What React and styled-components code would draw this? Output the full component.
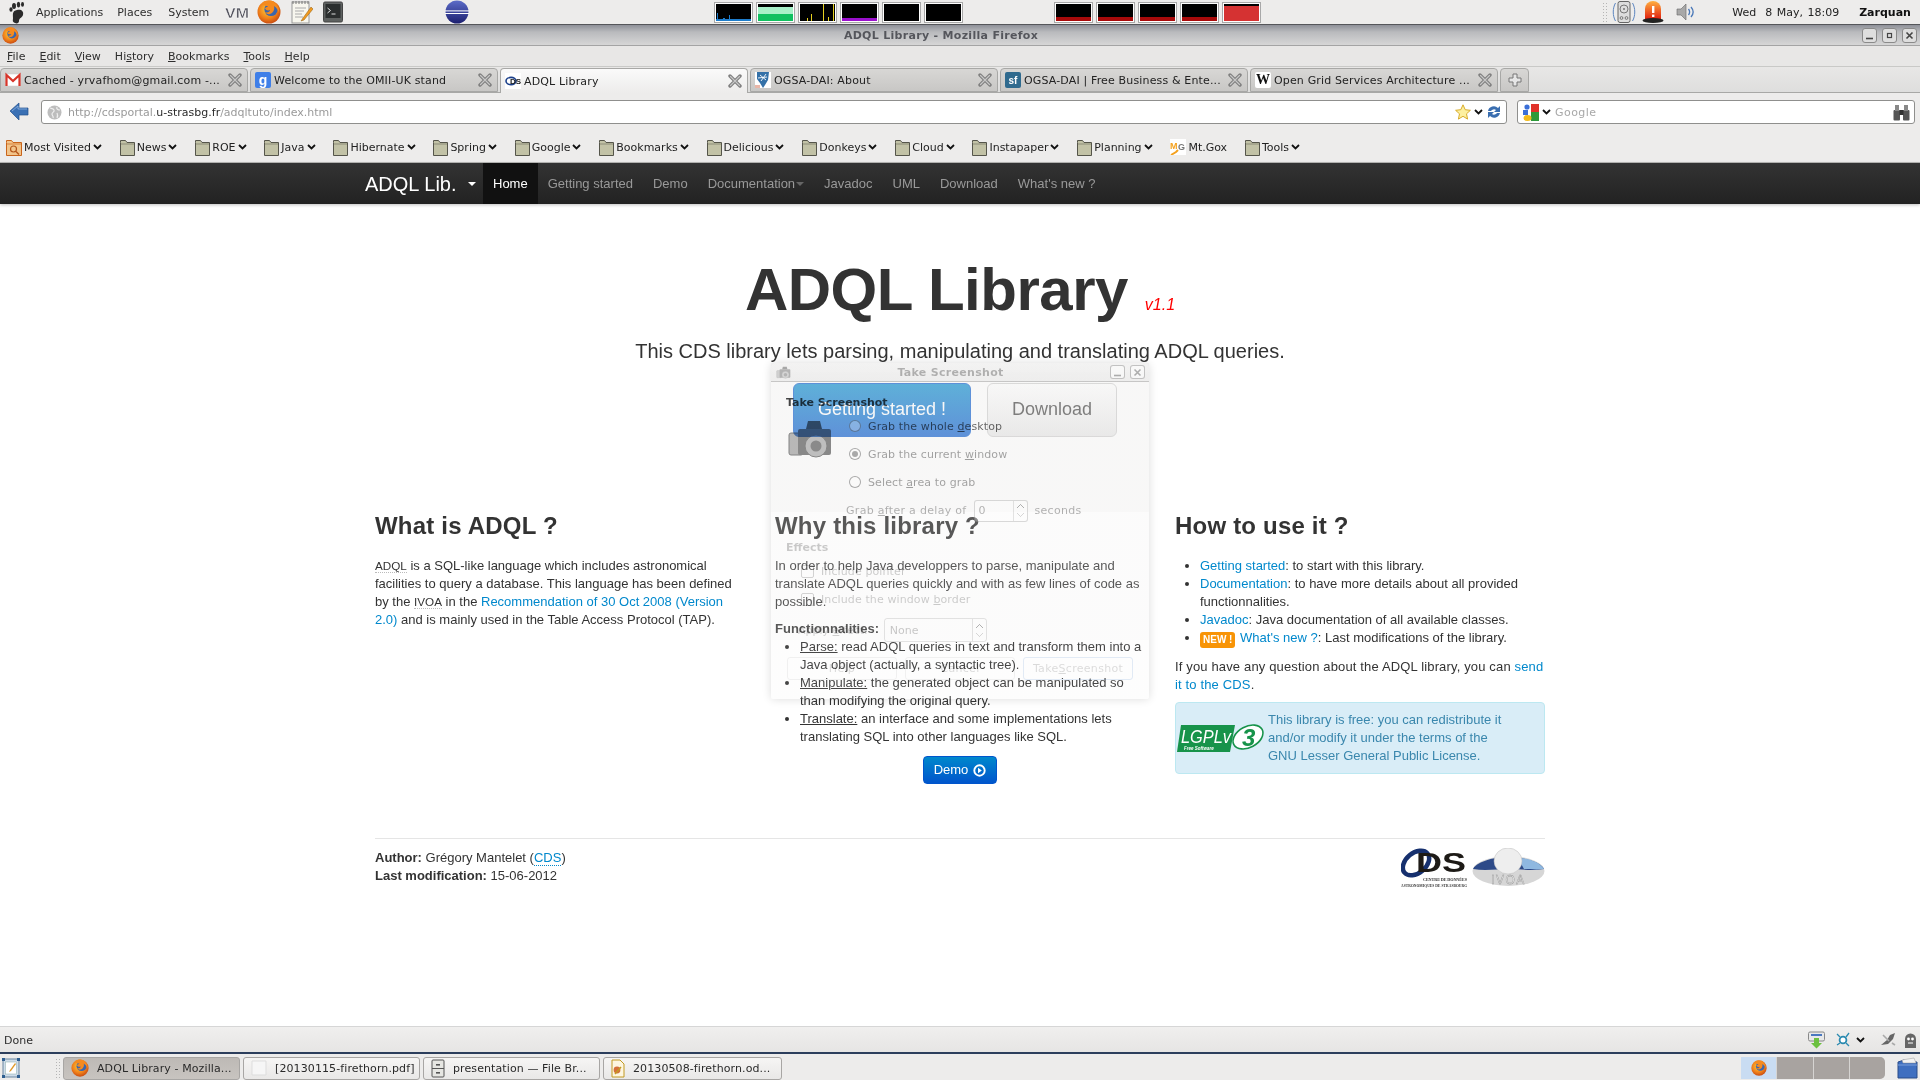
import styled, { createGlobalStyle } from 'styled-components'

const GlobalStyle = createGlobalStyle`
    html, body { margin: 0; padding: 0; background: #fff; }
    * { box-sizing: border-box; }
`

const Screen = styled.div`
    position: relative;
    width: 1920px;
    height: 1080px;
    overflow: hidden;
    display: flex;
    flex-direction: column;
    font-family: "DejaVu Sans", sans-serif;
    font-size: 11px;
    color: #222;
    background: #edeceb;
`

/* ---------- gnome top panel ---------- */
const TopPanel = styled.div`
    height: 25px;
    flex: none;
    display: flex;
    align-items: center;
    background: #edeceb;
    padding-left: 8px;
    border-bottom: 1px solid #55565a;
`
const PanelMenu = styled.span`
    margin-left: ${p => p.$gap}px;
    color: #2e2e2e;
`
const PanelIcon = styled.span`
    display: flex;
    margin-left: ${p => p.$gap}px;
`
const MonitorGroup = styled.div`
    display: flex;
    gap: 3px;
    margin-left: ${p => p.$gap}px;
`
const MonitorCell = styled.div`
    width: 39px;
    height: 21px;
    border: 1px solid #a8a8a8;
    padding: 1px;
    background: #fff;
    display: flex;
`
const PanelClock = styled.span`
    margin-left: 36px;
    color: #222;
    word-spacing: 1px;
    white-space: pre;
`
const PanelUser = styled.span`
    margin-left: 20px;
    font-weight: bold;
    color: #111;
`
const Dots = styled.span`
    width: 5px;
    height: 20px;
    margin-left: ${p => p.$gap}px;
    background-image: radial-gradient(#b5b5b5 0.8px, transparent 1px);
    background-size: 3px 3px;
`

/* ---------- firefox chrome ---------- */
const TitleBar = styled.div`
    height: 21px;
    flex: none;
    position: relative;
    display: flex;
    align-items: center;
    justify-content: space-between;
    padding: 1px 3px 0 2px;
    background: linear-gradient(#8e9098 0, #b9babd 35%, #d6d6d6 100%);
    border-bottom: 1px solid #a4a4a4;
`
const WindowTitle = styled.span`
    position: absolute;
    left: 0;
    right: 38px;
    top: 4px;
    text-align: center;
    font-weight: bold;
    letter-spacing: 0.3px;
    color: #55565c;
`
const WinButtons = styled.div`
    display: flex;
    gap: 5px;
`
const WinButton = styled.span`
    width: 15px;
    height: 15px;
    border: 1px solid #8a8a8a;
    border-radius: 3px;
    display: flex;
    align-items: center;
    justify-content: center;
    background: #dedede;
`
const MenuBar = styled.div`
    height: 21px;
    flex: none;
    display: flex;
    align-items: center;
    gap: 14px;
    padding: 1px 0 0 7px;
    background: #e8e7e6;
    border-bottom: 1px solid #c9c9c7;
    color: #2e2e2e;
`
const Mn = styled.span`
    text-decoration: underline;
`
const TabStrip = styled.div`
    height: 26px;
    flex: none;
    display: flex;
    align-items: flex-end;
    gap: 2px;
    background: linear-gradient(#e8e7e6, #dededd);
    border-bottom: 1px solid #a8a8a6;
`
const Tab = styled.div`
    width: 248px;
    margin-bottom: ${p => (p.$active ? '-1px' : '0')};
    height: ${p => (p.$active ? '25px' : '24px')};
    display: flex;
    align-items: center;
    padding: 0 5px 0 4px;
    gap: 3px;
    border: 1px solid #a8a8a6;
    border-bottom: ${p => (p.$active ? 'none' : '1px solid #a8a8a6')};
    border-radius: 4px 4px 0 0;
    background: ${p => (p.$active ? 'linear-gradient(#fafafa, #edeceb)' : 'linear-gradient(#d8d7d5, #c8c7c5)')};
    color: #222;
`
const TabTitle = styled.span`
    flex: 1;
    white-space: nowrap;
    overflow: hidden;
    letter-spacing: 0.15px;
    padding-top: 1px;
`
const NewTab = styled.div`
    width: 29px;
    height: 24px;
    display: flex;
    align-items: center;
    justify-content: center;
    border: 1px solid #a8a8a6;
    border-radius: 4px 4px 0 0;
    background: linear-gradient(#d8d7d5, #c8c7c5);
`
const FavText = styled.span`
    width: 16px;
    height: 16px;
    flex: none;
    display: flex;
    align-items: center;
    justify-content: center;
    border-radius: 2px;
    background: ${p => p.$bg};
    color: ${p => p.$color};
    font-family: ${p => p.$serif ? '"Liberation Serif", serif' : '"Liberation Sans", sans-serif'};
    font-size: ${p => p.$size || 11}px;
    font-weight: bold;
`
const UrlRow = styled.div`
    height: 32px;
    flex: none;
    display: flex;
    align-items: flex-start;
    padding: 7px 5px 0 9px;
    background: #edeceb;
`
const BackWrap = styled.span`
    display: flex;
    width: 32px;
    flex: none;
    padding-top: 2px;
`
const InputBox = styled.div`
    height: 24px;
    width: ${p => p.$width}px;
    margin-left: ${p => p.$gap || 0}px;
    flex: none;
    display: flex;
    align-items: center;
    padding: 0 4px 0 5px;
    gap: ${p => p.$inner || 3}px;
    background: #fff;
    border: 1px solid #8f8f8d;
    border-radius: 3px;
`
const UrlText = styled.span`
    flex: 1;
    margin-left: 3px;
    color: #9a9a9a;
`
const UrlHost = styled.span`
    color: #2a2a2a;
`
const SearchHint = styled.span`
    flex: 1;
    color: #a8a8a8;
    letter-spacing: 0.04em;
    margin-left: 2px;
`
const BookmarkBar = styled.div`
    height: 38px;
    flex: none;
    display: flex;
    align-items: center;
    padding: 7px 0 0 6px;
    background: #edeceb;
    border-bottom: 1px solid #b9b9b7;
    gap: 17.8px;
`
const Bookmark = styled.span`
    display: flex;
    align-items: center;
    gap: 2px;
    color: #222;
`

/* ---------- web page ---------- */
const Page = styled.div`
    flex: 1;
    min-height: 0;
    background: #fff;
    font-family: "Liberation Sans", Arial, sans-serif;
    font-size: 13px;
    line-height: 18px;
    color: #333;
`
const NavBar = styled.div`
    height: 41px;
    background: linear-gradient(#333, #222);
    box-shadow: 0 1px 3px rgba(0, 0, 0, 0.25);
    display: flex;
    padding-left: 365px;
`
const Brand = styled.div`
    width: 118px;
    display: flex;
    align-items: center;
    gap: 11px;
    font-size: 20px;
    color: #fff;
`
const Caret = styled.span`
    width: 0;
    height: 0;
    margin-left: ${p => p.$gap || 0}px;
    border-left: 4px solid transparent;
    border-right: 4px solid transparent;
    border-top: 4px solid ${p => p.$color};
`
const NavItem = styled.div`
    display: flex;
    align-items: center;
    padding: 0 10px;
    color: ${p => (p.$active ? '#fff' : '#999')};
    background: ${p => (p.$active ? '#111' : 'transparent')};
`
const Container = styled.div`
    width: 1170px;
    margin: 0 auto;
`
const Hero = styled.div`
    padding-top: 56px;
    text-align: center;
`
const HeroTitle = styled.h1`
    margin: 0;
    font-size: 60px;
    line-height: 60px;
    font-weight: bold;
    letter-spacing: -0.5px;
    color: #333;
`
const Version = styled.small`
    font-size: 16px;
    font-weight: normal;
    font-style: italic;
    letter-spacing: 0;
    color: #f00;
    margin-left: 17px;
`
const HeroLead = styled.p`
    margin: 3px 0 0;
    font-size: 20px;
    line-height: 27px;
    color: #333;
`
const HeroButtons = styled.div`
    display: flex;
    justify-content: center;
    gap: 16px;
    margin-top: 18px;
    padding-right: 10px;
`
const BigButton = styled.div`
    width: ${p => p.$width}px;
    height: 54px;
    display: flex;
    align-items: center;
    justify-content: center;
    padding-bottom: 3px;
    border-radius: 6px;
    font-size: 18px;
    border: 1px solid ${p => (p.$primary ? '#0055cc' : '#ccc')};
    background: ${p => (p.$primary ? 'linear-gradient(#0088cc, #0055cc)' : 'linear-gradient(#fff, #e6e6e6)')};
    color: ${p => (p.$primary ? '#fff' : '#333')};
`
const Columns = styled.div`
    display: grid;
    grid-template-columns: repeat(3, 370px);
    column-gap: 30px;
    margin-top: 71px;
`
const Column = styled.div``
const Heading = styled.h2`
    margin: 0 0 13px;
    font-size: 24px;
    line-height: 36px;
    font-weight: bold;
    letter-spacing: 0.2px;
    color: #333;
`
const Para = styled.p`
    margin: 0 0 ${p => p.$after ?? 10}px;
    letter-spacing: ${p => p.$track || 0}px;
`
const Abbr = styled.span`
    font-size: 11.7px;
    border-bottom: 1px dotted #bbb;
`
const Link = styled.span`
    color: #0088cc;
`
const UnderLine = styled.span`
    text-decoration: underline;
`
const List = styled.ul`
    margin: 0 0 10px;
    padding: 0 0 0 25px;
`
const NewLabel = styled.span`
    display: inline-block;
    padding: 0 3px;
    height: 16px;
    line-height: 16px;
    border-radius: 3px;
    background: #f89406;
    color: #fff;
    font-size: 10px;
    font-weight: bold;
    vertical-align: -1px;
    margin-right: 1px;
`
const DemoRow = styled.div`
    display: flex;
    justify-content: center;
    margin-top: 0;
`
const DemoButton = styled.div`
    width: 74px;
    height: 28px;
    display: flex;
    align-items: center;
    justify-content: center;
    gap: 5px;
    border: 1px solid #0055cc;
    border-radius: 4px;
    color: #fff;
    background: linear-gradient(#0088cc, #0055cc);
`
const Notice = styled.div`
    height: 72px;
    margin-top: 8px;
    display: flex;
    align-items: center;
    padding-left: 1px;
    gap: 2px;
    background: #d9edf7;
    border: 1px solid #bce8f1;
    border-radius: 4px;
    color: #3a87ad;
`
const Rule = styled.div`
    height: 1px;
    margin-top: 54px;
    background: #e5e5e5;
`
const Footer = styled.div`
    display: flex;
    justify-content: space-between;
    padding-top: 10px;
`
const FootLogos = styled.div`
    display: flex;
    gap: 5px;
    height: 40px;
    margin-top: -1px;
`
const CdsAbbr = styled.span`
    border-bottom: 1px dotted #0088cc;
    color: #0088cc;
`

/* ---------- fading screenshot dialog ---------- */
const Dialog = styled.div`
    position: absolute;
    left: 771px;
    top: 363px;
    width: 378px;
    height: 336px;
    display: flex;
    flex-direction: column;
    border-radius: 5px 5px 2px 2px;
    background: linear-gradient(
        rgba(237, 236, 235, 0.4) 0 149px,
        rgba(237, 236, 235, 0.2) 149px 277px,
        rgba(237, 236, 235, 0.1) 277px
    );
    box-shadow: 0 0 10px rgba(0, 0, 0, 0.14);
    pointer-events: none;
`
const DialogTitle = styled.div`
    height: 19px;
    flex: none;
    position: relative;
    display: flex;
    align-items: center;
    justify-content: space-between;
    padding: 0 4px;
    border-bottom: 1px solid rgba(0, 0, 0, 0.18);
    background: linear-gradient(rgba(200, 200, 200, 0.1), rgba(190, 190, 190, 0.18));
    font-weight: bold;
    letter-spacing: 0.3px;
    color: rgba(0, 0, 0, 0.27);
`
const DialogCaption = styled.span`
    position: absolute;
    left: 0;
    right: 19px;
    text-align: center;
`
const DialogWinBtn = styled.span`
    width: 15px;
    height: 14px;
    border: 1px solid rgba(0, 0, 0, 0.22);
    border-radius: 3px;
    background: rgba(255, 255, 255, 0.5);
    display: flex;
    align-items: center;
    justify-content: center;
`
const DialogIcon = styled.span`
    display: flex;
    opacity: 0.6;
`
const DialogBody = styled.div`
    flex: 1;
    display: flex;
    flex-direction: column;
    padding: 14px 16px 0 15px;
`
const DialogHead = styled.div`
    height: 16px;
    font-weight: bold;
    color: ${p => (p.$faint ? 'rgba(0,0,0,0.2)' : 'rgba(0,0,0,0.72)')};
    margin-top: ${p => p.$top || 0}px;
`
const GrabArea = styled.div`
    display: flex;
`
const CameraSlot = styled.div`
    width: 63px;
    flex: none;
    padding: 7px 0 0 2px;
    mix-blend-mode: multiply;
`
const RadioList = styled.div`
    display: flex;
    flex-direction: column;
`
const OptionRow = styled.div`
    height: 28px;
    display: flex;
    align-items: center;
    gap: 7px;
    padding-left: ${p => p.$indent || 0}px;
    color: ${p => p.$color || 'rgba(0,0,0,0.36)'};
    letter-spacing: 0.01em;
`
const Radio = styled.span`
    width: 12px;
    height: 12px;
    flex: none;
    border-radius: 50%;
    border: 1px solid rgba(0, 0, 0, 0.32);
    background: rgba(255, 255, 255, 0.25);
    display: flex;
    align-items: center;
    justify-content: center;
`
const RadioDot = styled.span`
    width: 6px;
    height: 6px;
    border-radius: 50%;
    background: rgba(0, 0, 0, 0.32);
`
const DelayRow = styled.div`
    height: 29px;
    display: flex;
    align-items: center;
    padding-left: 60px;
    gap: 7px;
    letter-spacing: 0.3px;
    color: rgba(0, 0, 0, 0.3);
`
const Spin = styled.span`
    width: 54px;
    height: 22px;
    display: flex;
    align-items: center;
    justify-content: space-between;
    padding: 0 0 0 4px;
    border: 1px solid rgba(0, 0, 0, 0.14);
    border-radius: 3px;
    background: rgba(255, 255, 255, 0.3);
`
const SpinArrows = styled.span`
    width: 14px;
    height: 100%;
    display: flex;
    align-items: center;
    justify-content: center;
    border-left: 1px solid rgba(0, 0, 0, 0.1);
`
const Check = styled.span`
    width: 13px;
    height: 13px;
    border: 1px solid rgba(0, 0, 0, 0.16);
    border-radius: 2px;
    display: flex;
`
const ApplyRow = styled.div`
    height: 24px;
    margin-top: 5px;
    display: flex;
    align-items: center;
    padding-left: 12px;
    gap: 12px;
    color: rgba(0, 0, 0, 0.18);
`
const Dropdown = styled.span`
    width: 103px;
    height: 24px;
    margin-left: 4px;
    display: flex;
    align-items: center;
    padding-left: 5px;
    justify-content: space-between;
    border: 1px solid rgba(0, 0, 0, 0.1);
    border-radius: 3px;
    color: rgba(0, 0, 0, 0.22);
`
const DialogFoot = styled.div`
    display: flex;
    gap: 8px;
    margin-top: 15px;
    padding-left: 1px;
`
const DialogBtn = styled.span`
    width: 110px;
    height: 23px;
    display: flex;
    align-items: center;
    justify-content: center;
    border-radius: 3px;
    letter-spacing: 0.3px;
    border: 1px solid ${p => (p.$focus ? 'rgba(60,120,200,0.14)' : 'rgba(0,0,0,0.05)')};
    color: rgba(0, 0, 0, 0.14);
`

/* ---------- taskbar + statusbar ---------- */
const StatusBar = styled.div`
    height: 28px;
    flex: none;
    display: flex;
    align-items: center;
    justify-content: space-between;
    padding: 1px 3px 0 4px;
    background: linear-gradient(#f0efee, #e6e5e4);
    border-top: 1px solid #d6d6d6;
    border-bottom: 2px solid #2c3e5c;
    color: #2e2e2e;
`
const StatusIcons = styled.div`
    display: flex;
    align-items: center;
`
const TaskBar = styled.div`
    height: 26px;
    flex: none;
    display: flex;
    align-items: center;
    background: #edeceb;
    padding: 2px 0 0 2px;
`
const TaskButton = styled.div`
    width: ${p => p.$width || 177}px;
    height: 23px;
    margin-left: 3px;
    display: flex;
    align-items: center;
    gap: 8px;
    padding-left: 7px;
    border: 1px solid #a8a6a4;
    border-radius: 3px;
    white-space: nowrap;
    letter-spacing: 0.1px;
    color: #2a2a2a;
    background: ${p => (p.$active ? 'linear-gradient(#bdb9b5, #c8c4c0)' : 'linear-gradient(#f6f5f4, #e9e8e7)')};
`
const Pager = styled.div`
    width: 144px;
    height: 22px;
    margin-left: 959px;
    display: flex;
    gap: 1px;
    border-radius: 0 5px 5px 0;
    overflow: hidden;
    background: #d6d4d2;
`
const PagerCell = styled.div`
    flex: 1;
    display: flex;
    justify-content: center;
    align-items: center;
    background: ${p => (p.$active ? '#c9dcf2' : '#a8a3a0')};
`

/* ---------- drawings ---------- */
const Svg = ({ w, h = w, vb, children }) => (
    <svg width={w} height={h} viewBox={vb || `0 0 ${w} ${h}`} style={{ display: 'block', flex: 'none' }}>{children}</svg>
)

const Firefox = ({ size = 24 }) => (
    <Svg w={size} vb="0 0 24 24">
        <defs>
            <radialGradient id="ffo" cx="0.45" cy="0.4" r="0.7">
                <stop offset="0" stopColor="#ffd23c" />
                <stop offset="0.55" stopColor="#f0801a" />
                <stop offset="1" stopColor="#b9380e" />
            </radialGradient>
        </defs>
        <circle cx="12" cy="12" r="11.5" fill="url(#ffo)" />
        <circle cx="14" cy="9.5" r="6.6" fill="#3a66ae" />
        <path d="M5 3c3-3 9-3 12-1 3 2 6 7 5 11-1-3-2-5-5-7 1 4-1 7-4 8-2 .6-4-.4-5-2 2 1 5 0 5-2-2 1-5 0-5-2 1-1 3-1 3-2-2 0-5 0-6-3z" fill="#f58a1f" />
    </Svg>
)
const FootIcon = () => (
    <Svg w={19} h={23} vb="0 0 19 23">
        <path d="M9 9c4-1 7 1 6 5-1 3-4 3-4 6 0 2-2 3-4 2-3-1-2-3-2-5 0-4-1-7 4-8z" fill="#2b2b2b" />
        <ellipse cx="6" cy="5" rx="2" ry="3" fill="#2b2b2b" />
        <ellipse cx="10.5" cy="3.6" rx="1.7" ry="2.8" fill="#2b2b2b" />
        <ellipse cx="14.5" cy="3.4" rx="1.5" ry="2.4" fill="#2b2b2b" />
        <ellipse cx="3" cy="8.5" rx="1.6" ry="2.2" fill="#2b2b2b" />
    </Svg>
)
const VmLogo = () => (
    <Svg w={24} h={16} vb="0 0 24 16">
        <text x="0" y="13.5" fontFamily="Liberation Sans" fontWeight="bold" fontSize="15" textLength="24" lengthAdjust="spacingAndGlyphs" fill="#55555f" stroke="#fff" strokeWidth="0.4">VM</text>
    </Svg>
)
const NotesIcon = () => (
    <Svg w={22} h={24} vb="0 0 22 24">
        <rect x="1" y="2" width="17" height="21" fill="#f7f6ee" stroke="#999" />
        <path d="M2 1v3M5 1v3M8 1v3M11 1v3M14 1v3M17 1v3" stroke="#777" />
        <path d="M4 8h11M4 11h9M4 14h7M4 17h8" stroke="#aaa" />
        <path d="M20 7l-8 11-2 3 3-1 9-11z" fill="#f29a1e" stroke="#8a5a10" strokeWidth="0.5" />
    </Svg>
)
const TerminalIcon = () => (
    <Svg w={20} h={23} vb="0 0 20 23">
        <rect x="0.5" y="1" width="19" height="20" rx="1.5" fill="#5e6160" stroke="#444" />
        <rect x="2.5" y="3" width="15" height="14" fill="#2b2e2e" />
        <path d="M4.5 7l3 2.5-3 2.5M8.5 13h4" stroke="#ddd" fill="none" />
    </Svg>
)
const EclipseIcon = () => (
    <Svg w={24} vb="0 0 24 24">
        <defs>
            <linearGradient id="ecl" x1="0" y1="0" x2="0" y2="1">
                <stop offset="0" stopColor="#5c6cc8" />
                <stop offset="1" stopColor="#1c1f70" />
            </linearGradient>
        </defs>
        <circle cx="12" cy="12" r="11.5" fill="url(#ecl)" />
        <rect x="0" y="10.4" width="24" height="1" fill="#fff" />
        <rect x="0" y="13" width="24" height="1" fill="#fff" />
    </Svg>
)
const Monitor = ({ bars }) => (
    <MonitorCell>
        <svg width="35" height="17" viewBox="0 0 35 17" style={{ display: 'block', background: '#000' }}>
            {bars.map((b, i) => <rect key={i} x={b[0]} y={b[1]} width={b[2]} height={b[3]} fill={b[4]} />)}
        </svg>
    </MonitorCell>
)
const DiskIcon = () => (
    <Svg w={24} vb="0 0 24 24">
        <rect x="6" y="1.5" width="12" height="21" rx="2" fill="#ddd" stroke="#666" />
        <circle cx="12" cy="9" r="4" fill="none" stroke="#777" />
        <circle cx="12" cy="9" r="1" fill="#777" />
        <circle cx="9.5" cy="18" r="1.4" fill="none" stroke="#777" />
        <circle cx="14.5" cy="18" r="1.4" fill="none" stroke="#777" />
        <path d="M3.5 3c-3 5-3 13 0 18M20.5 3c3 5 3 13 0 18" stroke="#5d86c0" fill="none" />
    </Svg>
)
const AlarmIcon = () => (
    <Svg w={22} h={24} vb="0 0 22 24">
        <defs>
            <linearGradient id="alm" x1="0" y1="0" x2="0" y2="1">
                <stop offset="0" stopColor="#ffb040" />
                <stop offset="1" stopColor="#e02010" />
            </linearGradient>
        </defs>
        <path d="M3 19V9a8 8 0 0 1 16 0v10z" fill="url(#alm)" />
        <ellipse cx="11" cy="20.5" rx="10.5" ry="2.5" fill="#222" />
        <rect x="10" y="6" width="2.4" height="7" fill="#fff" />
        <rect x="10" y="14.6" width="2.4" height="2.4" fill="#fff" />
    </Svg>
)
const SpeakerIcon = () => (
    <Svg w={20} vb="0 0 20 20">
        <path d="M1 7h4l5-5v16l-5-5H1z" fill="#a8a8a8" stroke="#666" strokeWidth="0.6" />
        <path d="M12.5 7c1.5 2 1.5 4 0 6M15 5c2.6 3 2.6 7 0 10" stroke="#4a78b8" fill="none" strokeWidth="1.3" />
    </Svg>
)
const WinGlyph = ({ type, faint }) => {
    const ink = faint ? 'rgba(0,0,0,.3)' : '#444'
    return (
        <Svg w={9} vb="0 0 9 9">
            {type === 'min' && <path d="M1 7.5h7" stroke={ink} strokeWidth="1.6" />}
            {type === 'max' && <rect x="2.5" y="2.5" width="4" height="4" fill="none" stroke={ink} strokeWidth="1.2" />}
            {type === 'close' && <path d="M1.5 1.5l6 6M7.5 1.5l-6 6" stroke={ink} strokeWidth="1.6" />}
        </Svg>
    )
}
const TabClose = () => (
    <Svg w={14} vb="0 0 14 14">
        <path d="M2 2l10 10M12 2L2 12" stroke="#7f7f7f" strokeWidth="3.4" strokeLinecap="round" />
        <path d="M2.5 2.5l9 9M11.5 2.5l-9 9" stroke="#c8c8c8" strokeWidth="1.2" strokeLinecap="round" />
    </Svg>
)
const Chevron = ({ w = 9 }) => (
    <Svg w={w} h={6} vb="0 0 9 6">
        <path d="M1 1l3.5 3.5L8 1" fill="none" stroke="#111" strokeWidth="1.8" />
    </Svg>
)
const Folder = () => (
    <Svg w={15} h={17} vb="0 0 15 17">
        <path d="M.5 3.5V1.5h5l1.5 2h7.5v13H.5z" fill="#c2c2a6" stroke="#55554a" />
        <path d="M1 5h13" stroke="#8c8c78" />
    </Svg>
)
const MostVisited = () => (
    <Svg w={16} h={17} vb="0 0 16 17">
        <path d="M.5 3.5V1.5h5l1.5 2h8.5v13H.5z" fill="#f2c48a" stroke="#c9641a" />
        <path d="M1 5h14" stroke="#d9813a" />
        <circle cx="7.5" cy="10" r="3" fill="none" stroke="#b4561a" strokeWidth="1.2" />
        <path d="M10 12.5l3 3" stroke="#b4561a" strokeWidth="1.4" />
    </Svg>
)
const MtGoxIcon = () => (
    <Svg w={16} vb="0 0 16 16">
        <rect width="16" height="16" fill="#fff" />
        <text x="0" y="10" fontFamily="Liberation Sans" fontWeight="bold" fontSize="9" fill="#f4a11e">M</text>
        <text x="8" y="11" fontFamily="Liberation Sans" fontWeight="bold" fontSize="9" fill="#777">G</text>
        <path d="M1 16l5-3 2-2" stroke="#f4a11e" strokeWidth="2" fill="none" />
    </Svg>
)
const GmailIcon = () => (
    <Svg w={16} vb="0 0 16 16">
        <rect x="0.5" y="2" width="15" height="12" fill="#fff" stroke="#ccc" strokeWidth="0.5" />
        <path d="M1.5 14V3l6.5 6 6.5-6v11" fill="none" stroke="#d8352a" strokeWidth="2.2" />
    </Svg>
)
const OgsaIcon = () => (
    <Svg w={16} vb="0 0 16 16">
        <rect width="16" height="16" fill="#fff" />
        <path d="M2 0h12l-1 8-3 5-2 3-3-5-3-4z" fill="#3471a8" />
        <path d="M5 3l6 5M11 2L6 9M3 6l9-1" stroke="#fff" strokeWidth="0.9" />
        <rect x="0" y="13" width="5" height="3" fill="#e9b6a8" />
    </Svg>
)
const CdsSmall = () => (
    <Svg w={16} vb="0 0 16 16">
        <rect width="16" height="16" fill="#fff" />
        <ellipse cx="6" cy="8" rx="5" ry="3.6" fill="none" stroke="#1a3f8a" strokeWidth="1.6" />
        <text x="5" y="11" fontFamily="Liberation Sans" fontWeight="bold" fontSize="8" fill="#222">DS</text>
    </Svg>
)
const GoogleEngine = () => (
    <Svg w={17} vb="0 0 17 17">
        <rect x="0" y="4" width="8" height="7" fill="#fff" />
        <rect x="8" y="0" width="8" height="8" fill="#e0322a" />
        <rect x="8" y="8" width="8" height="9" fill="#2d9a3a" />
        <circle cx="4" cy="3" r="2.6" fill="#3a6fd8" />
        <rect x="0" y="6" width="5" height="5" fill="#3a6fd8" />
        <ellipse cx="4.5" cy="14" rx="4" ry="3" fill="#f3bb1c" />
    </Svg>
)
const Binoculars = () => (
    <Svg w={17} vb="0 0 17 17">
        <rect x="0.5" y="6" width="6.5" height="10.5" rx="1" fill="#555" />
        <rect x="10" y="6" width="6.5" height="10.5" rx="1" fill="#555" />
        <rect x="2" y="1" width="4" height="6" fill="#888" />
        <rect x="11" y="1" width="4" height="6" fill="#888" />
        <rect x="6.5" y="6" width="4" height="5" fill="#333" />
    </Svg>
)
const Star = () => (
    <Svg w={16} vb="0 0 16 16">
        <path d="M8 .8l2.2 4.9 5.2.6-3.9 3.5 1.1 5.3L8 12.3l-4.6 2.8 1.1-5.3L.6 6.3l5.2-.6z" fill="#fdf0a0" stroke="#d8ac2a" />
    </Svg>
)
const Reload = () => (
    <Svg w={16} vb="0 0 16 16">
        <path d="M2 7a6 6 0 0 1 10-3l2-2v6H8l2-2a3.5 3.5 0 0 0-5 1z" fill="#3a6eb0" />
        <path d="M14 9a6 6 0 0 1-10 3l-2 2V8h6l-2 2a3.5 3.5 0 0 0 5-1z" fill="#3a6eb0" />
    </Svg>
)
const BackArrow = () => (
    <Svg w={20} h={19} vb="0 0 20 19">
        <path d="M1 9l9-8v5h9v7h-9v5z" fill="#3a70b4" stroke="#24508c" strokeWidth="0.7" />
        <path d="M3 9l6-5v3h9" fill="none" stroke="#8fb4e0" strokeWidth="0.8" />
    </Svg>
)
const Globe = () => (
    <Svg w={15} vb="0 0 15 15">
        <circle cx="7.5" cy="7.5" r="7" fill="#bdbdbd" />
        <path d="M3 3c2 1 3 0 4 2s-2 2-2 4 2 2 1 4M10 2c-1 2 1 3 3 3M10 8c1 2 1 3 0 5" stroke="#efefef" fill="none" strokeWidth="1.2" />
    </Svg>
)
const Plus = () => (
    <Svg w={14} vb="0 0 14 14">
        <path d="M5 1h4v4h4v4H9v4H5V9H1V5h4z" fill="#e6e6e6" stroke="#777" />
    </Svg>
)
const ShowDesktop = () => (
    <Svg w={18} h={22} vb="0 0 18 22">
        <rect x="1" y="2" width="16" height="18" rx="2" fill="#cfdce8" stroke="#6a86a0" />
        <rect x="3.5" y="5" width="11" height="12" fill="#fff" stroke="#8aa" strokeWidth="0.5" />
        <path d="M13 6l-5 7-1 2 2-1 5-7z" fill="#e09a2a" />
        <g fill="#2f5f90">
            <rect x="0" y="1" width="3" height="3" /><rect x="15" y="1" width="3" height="3" />
            <rect x="0" y="18" width="3" height="3" /><rect x="15" y="18" width="3" height="3" />
        </g>
    </Svg>
)
const PdfBlank = () => (
    <Svg w={16} vb="0 0 16 16">
        <path d="M1 1h14v14H1z" fill="#f6f6f6" stroke="#ddd" />
    </Svg>
)
const CabinetIcon = () => (
    <Svg w={14} h={19} vb="0 0 14 19">
        <rect x="1" y="1" width="12" height="17" rx="1" fill="#e6e6e2" stroke="#555" />
        <path d="M1 9.5h12" stroke="#555" />
        <rect x="5" y="5" width="4" height="1.6" fill="#555" />
        <rect x="5" y="13" width="4" height="1.6" fill="#555" />
    </Svg>
)
const OdpIcon = () => (
    <Svg w={14} h={19} vb="0 0 14 19">
        <path d="M1 1h8l4 4v13H1z" fill="#fdf6e0" stroke="#c29a22" />
        <circle cx="6" cy="11" r="3.4" fill="#d4703a" />
        <path d="M4 15l6-7" stroke="#c29a22" strokeWidth="1.4" />
    </Svg>
)
const UpdateIcon = () => (
    <Svg w={17} h={18} vb="0 0 17 18">
        <rect x="0.5" y="1" width="16" height="9" rx="1.5" fill="#e8e8e8" stroke="#888" />
        <path d="M3 4h11" stroke="#4a78c0" strokeWidth="2" />
        <path d="M6 7h5v5h3l-5.5 5.5L3 12h3z" fill="#6cc040" />
    </Svg>
)
const NetIcon = () => (
    <Svg w={16} vb="0 0 16 16">
        <circle cx="8" cy="8" r="3.4" fill="#fff" stroke="#2a8ab0" strokeWidth="1.8" />
        <path d="M5 5L2 2M11 5l3-4M5 11l-3 2M11 11l3 3" stroke="#2a8ab0" strokeWidth="1.3" />
    </Svg>
)
const FlyIcon = () => (
    <Svg w={16} h={14} vb="0 0 16 14">
        <path d="M1 12l6-5 3-5 5-2-2 6-5 5z" fill="#666" />
        <path d="M3 2l6 6M12 10l3 2" stroke="#aaa" strokeWidth="1.6" />
    </Svg>
)
const GhostIcon = () => (
    <Svg w={13} h={15} vb="0 0 13 15">
        <path d="M1 15V6a5.5 5.5 0 0 1 11 0v9z" fill="#666" />
        <circle cx="4.5" cy="6" r="1.4" fill="#fff" />
        <circle cx="8.5" cy="6" r="1.4" fill="#fff" />
        <path d="M4 10h5" stroke="#fff" />
    </Svg>
)
const FolderBlue = () => (
    <Svg w={21} h={22} vb="0 0 21 22">
        <path d="M1 5l6-2 3 2h10v16H1z" fill="#3f6fc0" stroke="#2a4c88" />
        <path d="M5 3l12-2 2 5H6z" fill="#f2f2f2" stroke="#999" strokeWidth="0.5" />
        <path d="M1 8h19" stroke="#7aa0dc" />
    </Svg>
)
const Camera = ({ w = 44, h = 40 }) => (
    <Svg w={w} h={h} vb="0 0 44 40">
        <rect x="1" y="14" width="14" height="22" rx="2" fill="#bdbdbd" stroke="#888" />
        <rect x="10" y="10" width="33" height="26" rx="2" fill="#8c8c8c" />
        <path d="M18 10l2-8h12l2 8z" fill="#777" />
        <circle cx="28" cy="27" r="11" fill="#c4c4c4" stroke="#8a8a8a" />
        <circle cx="28" cy="27" r="5.5" fill="#8e8e8e" />
    </Svg>
)
const DemoIcon = () => (
    <Svg w={13} vb="0 0 13 13">
        <circle cx="6.5" cy="6.5" r="5.2" fill="none" stroke="#fff" strokeWidth="1.9" />
        <path d="M5 3.8l3.8 2.7L5 9.2z" fill="#fff" />
    </Svg>
)
const SpinGlyph = () => (
    <Svg w={9} h={15} vb="0 0 9 15">
        <path d="M1 5l3.5-3.5L8 5" fill="none" stroke="rgba(0,0,0,.3)" />
        <path d="M1 10l3.5 3.5L8 10" fill="none" stroke="rgba(0,0,0,.15)" />
    </Svg>
)
const LgplLogo = () => (
    <Svg w={89} h={32} vb="0 0 89 32">
        <path d="M4 3h54l-5 27H0z" fill="#17934a" />
        <text x="4" y="21" fontFamily="Liberation Sans" fontStyle="italic" fontSize="19" textLength="50" lengthAdjust="spacingAndGlyphs" fill="#fff">LGPLv</text>
        <text x="7" y="28" fontFamily="Liberation Sans" fontStyle="italic" fontWeight="bold" fontSize="4.5" fill="#fff">Free Software</text>
        <ellipse cx="71" cy="15" rx="16" ry="10.5" transform="rotate(-28 71 15)" fill="#fff" stroke="#17934a" strokeWidth="1.6" />
        <text x="65" y="24" fontFamily="Liberation Sans" fontStyle="italic" fontWeight="bold" fontSize="24" fill="#17934a">3</text>
    </Svg>
)
const CdsLogo = () => (
    <Svg w={66} h={40} vb="0 0 66 40">
        <ellipse cx="15" cy="15" rx="15" ry="10" transform="rotate(-40 15 15)" fill="none" stroke="#16306e" strokeWidth="4.5" />
        <text x="15" y="24" fontFamily="Liberation Sans" fontWeight="bold" fontSize="28" textLength="50" lengthAdjust="spacingAndGlyphs" fill="#1d1a16">DS</text>
        <text x="22" y="33" fontFamily="Liberation Serif" fontWeight="bold" fontSize="4.2" textLength="44" fill="#333">CENTRE DE DONNÉES</text>
        <text x="0" y="39" fontFamily="Liberation Serif" fontWeight="bold" fontSize="3.6" textLength="66" fill="#333">ASTRONOMIQUES DE STRASBOURG</text>
    </Svg>
)
const IvoaLogo = () => (
    <Svg w={73} h={38} vb="0 0 73 38">
        <ellipse cx="36.5" cy="23" rx="36" ry="15" fill="#d6d6d6" />
        <path d="M1 21a36 14 0 0 1 71 0c-12 2-24 0-35 0s-24 2-36 0z" fill="#2d4a88" />
        <path d="M46 10c10 0 22 4 26 11-8 1-14 0-20 0z" fill="#8fb8e0" />
        <ellipse cx="36" cy="13" rx="14" ry="13" fill="#eeeeee" stroke="#bbb" strokeWidth="0.5" />
        <text x="36.5" y="36" textAnchor="middle" fontFamily="Liberation Sans" fontSize="12" letterSpacing="1.5" fill="#f5f5f5" stroke="#888" strokeWidth="0.4">IVOA</text>
    </Svg>
)

const greenMonitor = [[0, 3, 35, 7, '#a8f0c8'], [0, 10, 35, 7, '#10c060']]
const blueMonitor = [[0, 15, 35, 2, '#1d7ccc'], [1, 9, 1, 8, '#1d7ccc'], [7, 14, 2, 3, '#1d7ccc'], [13, 11, 1, 6, '#1d7ccc']]
const yellowMonitor = [[7, 14, 1, 3, '#e6d020'], [11, 10, 1, 7, '#e6d020'], [23, 0, 1, 17, '#e6d020'], [28, 13, 1, 4, '#e6d020'], [33, 0, 1, 17, '#e6d020']]
const purpleMonitor = [[0, 14, 35, 3, '#9a10cc']]
const redBase = [[0, 13, 35, 4, '#a80a0a']]
const redFull = [[0, 2, 35, 15, '#d53232']]

const tabs = [
    { title: 'Cached - yrvafhom@gmail.com -...', icon: <GmailIcon /> },
    { title: 'Welcome to the OMII-UK stand', icon: <FavText $bg="#3f7fe8" $color="#fff" $size={14}>g</FavText> },
    { title: 'ADQL Library', icon: <CdsSmall />, active: true },
    { title: 'OGSA-DAI: About', icon: <OgsaIcon /> },
    { title: 'OGSA-DAI | Free Business & Ente...', icon: <FavText $bg="#2f6a8e" $color="#fff" $size={10}>sf</FavText> },
    { title: 'Open Grid Services Architecture ...', icon: <FavText $bg="#fff" $color="#111" $serif $size={14}>W</FavText> },
]

const bookmarks = ['News', 'ROE', 'Java', 'Hibernate', 'Spring', 'Google', 'Bookmarks', 'Delicious', 'Donkeys', 'Cloud', 'Instapaper', 'Planning']

const navItems = ['Getting started', 'Demo', 'Documentation', 'Javadoc', 'UML', 'Download', "What's new ?"]

function App() {
    return (
        <Screen>
            <GlobalStyle />
            <TopPanel>
                <FootIcon />
                <PanelMenu $gap={9}>Applications</PanelMenu>
                <PanelMenu $gap={14}>Places</PanelMenu>
                <PanelMenu $gap={16}>System</PanelMenu>
                <PanelIcon $gap={16}><VmLogo /></PanelIcon>
                <PanelIcon $gap={8}><Firefox /></PanelIcon>
                <PanelIcon $gap={10}><NotesIcon /></PanelIcon>
                <PanelIcon $gap={10}><TerminalIcon /></PanelIcon>
                <PanelIcon $gap={102}><EclipseIcon /></PanelIcon>
                <MonitorGroup $gap={245}>
                    <Monitor bars={blueMonitor} />
                    <Monitor bars={greenMonitor} />
                    <Monitor bars={yellowMonitor} />
                    <Monitor bars={purpleMonitor} />
                    <Monitor bars={[]} />
                    <Monitor bars={[]} />
                </MonitorGroup>
                <MonitorGroup $gap={91}>
                    <Monitor bars={redBase} />
                    <Monitor bars={redBase} />
                    <Monitor bars={redBase} />
                    <Monitor bars={redBase} />
                    <Monitor bars={redFull} />
                </MonitorGroup>
                <Dots $gap={341} />
                <PanelIcon $gap={5}><DiskIcon /></PanelIcon>
                <PanelIcon $gap={6}><AlarmIcon /></PanelIcon>
                <PanelIcon $gap={12}><SpeakerIcon /></PanelIcon>
                <PanelClock>{'Wed  8 May, 18:09'}</PanelClock>
                <PanelUser>Zarquan</PanelUser>
            </TopPanel>

            <TitleBar>
                <Firefox size={17} />
                <WindowTitle>ADQL Library - Mozilla Firefox</WindowTitle>
                <WinButtons>
                    <WinButton><WinGlyph type="min" /></WinButton>
                    <WinButton><WinGlyph type="max" /></WinButton>
                    <WinButton><WinGlyph type="close" /></WinButton>
                </WinButtons>
            </TitleBar>

            <MenuBar>
                <span><Mn>F</Mn>ile</span>
                <span><Mn>E</Mn>dit</span>
                <span><Mn>V</Mn>iew</span>
                <span>Hi<Mn>s</Mn>tory</span>
                <span><Mn>B</Mn>ookmarks</span>
                <span><Mn>T</Mn>ools</span>
                <span><Mn>H</Mn>elp</span>
            </MenuBar>

            <TabStrip>
                {tabs.map(t => (
                    <Tab key={t.title} $active={t.active}>
                        {t.icon}
                        <TabTitle>{t.title}</TabTitle>
                        <TabClose />
                    </Tab>
                ))}
                <NewTab><Plus /></NewTab>
            </TabStrip>

            <UrlRow>
                <BackWrap><BackArrow /></BackWrap>
                <InputBox $width={1466}>
                    <Globe />
                    <UrlText>http://cdsportal.<UrlHost>u-strasbg.fr</UrlHost>/adqltuto/index.html</UrlText>
                    <Star />
                    <Chevron />
                    <Reload />
                </InputBox>
                <InputBox $width={398} $gap={10} $inner={2}>
                    <GoogleEngine />
                    <Chevron />
                    <SearchHint>Google</SearchHint>
                    <Binoculars />
                </InputBox>
            </UrlRow>

            <BookmarkBar>
                <Bookmark><MostVisited />Most Visited<Chevron /></Bookmark>
                {bookmarks.map(b => <Bookmark key={b}><Folder />{b}<Chevron /></Bookmark>)}
                <Bookmark><MtGoxIcon />Mt.Gox</Bookmark>
                <Bookmark><Folder />Tools<Chevron /></Bookmark>
            </BookmarkBar>

            <Page>
                <NavBar>
                    <Brand>ADQL Lib.<Caret $color="#fff" /></Brand>
                    <NavItem $active>Home</NavItem>
                    {navItems.map(n => (
                        <NavItem key={n}>{n}{n === 'Documentation' && <Caret $color="#666" $gap={1} />}</NavItem>
                    ))}
                </NavBar>
                <Container>
                    <Hero>
                        <HeroTitle>ADQL Library<Version>v1.1</Version></HeroTitle>
                        <HeroLead>This CDS library lets parsing, manipulating and translating ADQL queries.</HeroLead>
                        <HeroButtons>
                            <BigButton $primary $width={178}>Getting started !</BigButton>
                            <BigButton $width={130}>Download</BigButton>
                        </HeroButtons>
                    </Hero>
                    <Columns>
                        <Column>
                            <Heading>What is ADQL ?</Heading>
                            <Para>
                                <Abbr>ADQL</Abbr> is a SQL-like language which includes astronomical facilities to query a database. This language has been defined by the <Abbr>IVOA</Abbr> in the <Link>Recommendation of 30 Oct 2008 (Version 2.0)</Link> and is mainly used in the Table Access Protocol (TAP).
                            </Para>
                        </Column>
                        <Column>
                            <Heading>Why this library ?</Heading>
                            <Para $after={9}>In order to help Java developpers to parse, manipulate and translate ADQL queries quickly and with as few lines of code as possible.</Para>
                            <Para $after={0}><b>Functionnalities:</b></Para>
                            <List>
                                <li><UnderLine>Parse:</UnderLine> read ADQL queries in text and transform them into a Java object (actually, a syntactic tree).</li>
                                <li><UnderLine>Manipulate:</UnderLine> the generated object can be manipulated so than modifying the original query.</li>
                                <li><UnderLine>Translate:</UnderLine> an interface and some implementations lets translating SQL into other languages like SQL.</li>
                            </List>
                            <DemoRow><DemoButton>Demo<DemoIcon /></DemoButton></DemoRow>
                        </Column>
                        <Column>
                            <Heading>How to use it ?</Heading>
                            <List>
                                <li><Link>Getting started</Link>: to start with this library.</li>
                                <li><Link>Documentation</Link>: to have more details about all provided functionnalities.</li>
                                <li><Link>Javadoc</Link>: Java documentation of all available classes.</li>
                                <li><NewLabel>NEW !</NewLabel> <Link>What's new ?</Link>: Last modifications of the library.</li>
                            </List>
                            <Para $after={0} $track={0.15}>If you have any question about the ADQL library, you can <Link>send<br />it to the CDS</Link>.</Para>
                            <Notice>
                                <LgplLogo />
                                <span>This library is free: you can redistribute it<br />and/or modify it under the terms of the<br />GNU Lesser General Public License.</span>
                            </Notice>
                        </Column>
                    </Columns>
                    <Rule />
                    <Footer>
                        <div>
                            <b>Author:</b> Grégory Mantelet (<CdsAbbr>CDS</CdsAbbr>)<br />
                            <b>Last modification:</b> 15-06-2012
                        </div>
                        <FootLogos><CdsLogo /><IvoaLogo /></FootLogos>
                    </Footer>
                </Container>
            </Page>

            <StatusBar>
                <span>Done</span>
                <StatusIcons>
                    <UpdateIcon />
                    <PanelIcon $gap={10}><NetIcon /></PanelIcon>
                    <PanelIcon $gap={5}><Chevron /></PanelIcon>
                    <PanelIcon $gap={15}><FlyIcon /></PanelIcon>
                    <PanelIcon $gap={8}><GhostIcon /></PanelIcon>
                </StatusIcons>
            </StatusBar>

            <TaskBar>
                <ShowDesktop />
                <Dots $gap={35} />
                <TaskButton $active><Firefox size={18} />ADQL Library - Mozilla...</TaskButton>
                <TaskButton><PdfBlank />[20130115-firethorn.pdf]</TaskButton>
                <TaskButton><CabinetIcon />presentation — File Br...</TaskButton>
                <TaskButton $width={179}><OdpIcon />20130508-firethorn.od...</TaskButton>
                <Pager>
                    <PagerCell $active><Firefox size={16} /></PagerCell>
                    <PagerCell />
                    <PagerCell />
                    <PagerCell />
                </Pager>
                <PanelIcon $gap={12}><FolderBlue /></PanelIcon>
            </TaskBar>

            <Dialog>
                <DialogTitle>
                    <DialogIcon><Camera w={17} h={13} /></DialogIcon>
                    <DialogCaption>Take Screenshot</DialogCaption>
                    <WinButtons>
                        <DialogWinBtn><WinGlyph type="min" faint /></DialogWinBtn>
                        <DialogWinBtn><WinGlyph type="close" faint /></DialogWinBtn>
                    </WinButtons>
                </DialogTitle>
                <DialogBody>
                    <DialogHead>Take Screenshot</DialogHead>
                    <GrabArea>
                        <CameraSlot><Camera /></CameraSlot>
                        <RadioList>
                            <OptionRow $color="rgba(0,0,0,0.6)"><Radio /><span>Grab the whole <Mn>d</Mn>esktop</span></OptionRow>
                            <OptionRow><Radio><RadioDot /></Radio><span>Grab the current <Mn>w</Mn>indow</span></OptionRow>
                            <OptionRow><Radio /><span>Select <Mn>a</Mn>rea to grab</span></OptionRow>
                        </RadioList>
                    </GrabArea>
                    <DelayRow>
                        <span>Grab <Mn>a</Mn>fter a delay of</span>
                        <Spin>0<SpinArrows><SpinGlyph /></SpinArrows></Spin>
                        <span>seconds</span>
                    </DelayRow>
                    <DialogHead $faint $top={16}>Effects</DialogHead>
                    <OptionRow $indent={15} $color="rgba(0,0,0,0.2)"><Check /><span>Include pointer</span></OptionRow>
                    <OptionRow $indent={15} $color="rgba(0,0,0,0.2)"><Check /><span>Include the window <Mn>b</Mn>order</span></OptionRow>
                    <ApplyRow>
                        <span>Apply <Mn>e</Mn>ffect:</span>
                        <Dropdown>None<SpinArrows><SpinGlyph /></SpinArrows></Dropdown>
                    </ApplyRow>
                    <DialogFoot>
                        <DialogBtn>Help</DialogBtn>
                        <DialogBtn>Cancel</DialogBtn>
                        <DialogBtn $focus>Take <Mn>S</Mn>creenshot</DialogBtn>
                    </DialogFoot>
                </DialogBody>
            </Dialog>
        </Screen>
    )
}

export default App
